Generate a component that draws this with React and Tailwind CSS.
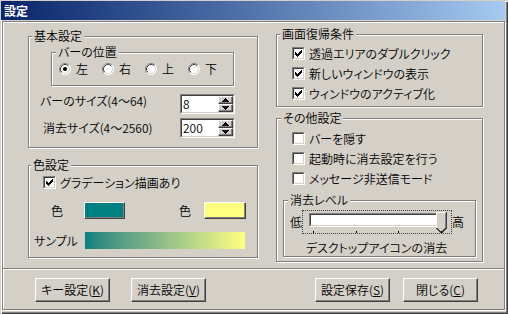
import React from 'react';

// Win2000-style 設定 dialog

const sunkenOuter = 'border border-t-[#808080] border-l-[#808080] border-b-white border-r-white';
const sunkenInner = 'border border-t-[#404040] border-l-[#404040] border-b-[#d4d0c8] border-r-[#d4d0c8]';
const raised = 'border border-t-white border-l-white border-b-[#404040] border-r-[#404040] shadow-[inset_-1px_-1px_0_#808080]';
const etched = 'relative border border-[#808080] shadow-[inset_1px_1px_0_#fff,1px_1px_0_#fff]';

function Group({ label, labelPos = 'left-[3px]', className = '', children }) {
    return (
        <div className={`${etched} ${className}`}>
            <span className={`absolute -top-[8px] ${labelPos} bg-[#d4d0c8] px-[2px] leading-[14px] whitespace-nowrap`}>{label}</span>
            {children}
        </div>
    );
}

function Check({ checked }) {
    return (
        <div className={`w-[13px] h-[13px] shrink-0 ${sunkenOuter}`}>
            <div className={`w-full h-full bg-white ${sunkenInner}`}>
                {checked && (
                    <svg width="9" height="9" viewBox="0 0 9 9" shapeRendering="crispEdges" className="block">
                        <path d="M7 1h1v1h-1z M6 2h2v1h-2z M1 3h1v1h-1z M5 3h3v1h-3z M1 4h2v1h-2z M4 4h3v1h-3z M1 5h5v1h-5z M2 6h3v1h-3z M3 7h1v1h-1z" fill="#000" />
                    </svg>
                )}
            </div>
        </div>
    );
}

function CheckRow({ checked, children }) {
    return (
        <div className="flex items-center h-[13px]">
            <Check checked={checked} />
            <span className="ml-[4px] leading-[14px] whitespace-nowrap">{children}</span>
        </div>
    );
}

function Radio({ checked, label }) {
    return (
        <div className="flex items-center w-[43px] h-[12px]">
            <svg width="12" height="12" viewBox="0 0 12 12" className="shrink-0">
                <circle cx="6" cy="6" r="5.5" fill="#fff" />
                <path d="M2.11 9.89 A5.5 5.5 0 0 1 9.89 2.11" fill="none" stroke="#808080" />
                <path d="M9.89 2.11 A5.5 5.5 0 0 1 2.11 9.89" fill="none" stroke="#fff" />
                <path d="M2.82 9.18 A4.5 4.5 0 0 1 9.18 2.82" fill="none" stroke="#404040" />
                <path d="M9.18 2.82 A4.5 4.5 0 0 1 2.82 9.18" fill="none" stroke="#d4d0c8" />
                {checked && <circle cx="6" cy="6" r="2" fill="#000" />}
            </svg>
            <span className="ml-[5px] leading-[14px]">{label}</span>
        </div>
    );
}

function Arrow({ down }) {
    return (
        <svg width="7" height="4" viewBox="0 0 7 4" shapeRendering="crispEdges" className="block">
            <path d={down ? 'M0 0h7v1h-7z M1 1h5v1h-5z M2 2h3v1h-3z M3 3h1v1h-1z' : 'M3 0h1v1h-1z M2 1h3v1h-3z M1 2h5v1h-5z M0 3h7v1h-7z'} fill="#000" />
        </svg>
    );
}

function Spin({ value }) {
    return (
        <div className={`w-[55px] h-[20px] ${sunkenOuter}`}>
            <div className={`w-full h-full flex bg-white ${sunkenInner}`}>
                <span className="pl-[1px] leading-[16px]">{value}</span>
                <div className="ml-auto flex flex-col w-[15px]">
                    <div className={`h-[8px] bg-[#d4d0c8] flex items-center justify-center ${raised}`}>
                        <Arrow />
                    </div>
                    <div className={`h-[8px] bg-[#d4d0c8] flex items-center justify-center ${raised}`}>
                        <Arrow down />
                    </div>
                </div>
            </div>
        </div>
    );
}

function Btn({ label, keyChar, className = '' }) {
    return (
        <button type="button" className={`w-[75px] h-[24px] bg-[#d4d0c8] flex items-center justify-center leading-[14px] ${raised} ${className}`}>
            {label}(<span className="underline">{keyChar}</span>)
        </button>
    );
}

function Swatch({ color, className = '' }) {
    return <div className={`h-[17px] ${raised} ${color} ${className}`} />;
}

export default function App() {
    return (
        <div className="w-[508px] h-[314px] bg-[#d4d0c8] text-black text-[12px] font-['Noto_Sans_CJK_JP',sans-serif] font-[350] [font-feature-settings:'palt'] pt-[1px] pl-[1px] overflow-hidden shadow-[inset_1px_1px_0_#d4d0c8,inset_2px_2px_0_#fff,inset_-1px_-1px_0_#404040,inset_-2px_-2px_0_#808080]">
            {/* Title bar */}
            <div className="h-[19px] w-[504px] bg-linear-to-r from-[#0a246a] to-[#a6caf0] flex items-center pl-[3px] text-white font-bold leading-[14px]">
                設定
            </div>

            {/* Body */}
            <div className="ml-[1px] mt-[1px] w-[503px] h-[289px] border border-[#808080] shadow-[inset_1px_1px_0_#fff,1px_1px_0_#fff] flex flex-col">
                <div className="h-[246px] flex">
                    {/* Left column */}
                    <div className="ml-[25px] mt-[14px] w-[230px] flex flex-col">
                        <Group label="基本設定" className="h-[112px] flex flex-col">
                            <Group label="バーの位置" labelPos="left-[4px]" className="ml-[22px] mt-[15px] w-[183px] h-[34px] flex pl-[7px] pt-[10px]">
                                <Radio checked label="左" />
                                <Radio label="右" />
                                <Radio label="上" />
                                <Radio label="下" />
                            </Group>
                            <div className="mt-[8px] h-[20px] flex items-center">
                                <span className="ml-[11px] mb-[6px] leading-[14px]">バーのサイズ(4～64)</span>
                                <div className="ml-auto mr-[22px]"><Spin value="8" /></div>
                            </div>
                            <div className="mt-[4px] h-[20px] flex items-center">
                                <span className="ml-[14px] mb-[1px] leading-[14px]">消去サイズ(4～2560)</span>
                                <div className="ml-auto mr-[22px]"><Spin value="200" /></div>
                            </div>
                        </Group>

                        <Group label="色設定" labelPos="left-[2px]" className="mt-[17px] h-[93px] flex flex-col">
                            <div className="mt-[10px] pl-[14px]">
                                <CheckRow checked>グラデーション描画あり</CheckRow>
                            </div>
                            <div className="mt-[13px] h-[17px] flex items-center">
                                <span className="ml-[22px] w-[12px] leading-[14px]">色</span>
                                <Swatch color="bg-[#008080]" className="ml-[21px] w-[41px]" />
                                <span className="ml-[54px] w-[12px] leading-[14px]">色</span>
                                <Swatch color="bg-[#ffff80]" className="ml-[13px] w-[42px]" />
                            </div>
                            <div className="mt-[13px] h-[17px] flex items-center">
                                <span className="ml-[5px] w-[51px] leading-[14px]">サンプル</span>
                                <div className="w-[160px] h-[17px] bg-linear-to-r from-[#008080] to-[#ffff80]" />
                            </div>
                        </Group>
                    </div>

                    {/* Right column */}
                    <div className="ml-[18px] mt-[12px] w-[207px] flex flex-col">
                        <Group label="画面復帰条件" className="h-[73px] flex flex-col gap-[7px] pt-[12px] pl-[15px]">
                            <CheckRow checked>透過エリアのダブルクリック</CheckRow>
                            <CheckRow checked>新しいウィンドウの表示</CheckRow>
                            <CheckRow checked>ウィンドウのアクティブ化</CheckRow>
                        </Group>

                        <Group label="その他設定" labelPos="left-[4px]" className="mt-[11px] h-[144px] flex flex-col">
                            <div className="mt-[13px] pl-[15px] flex flex-col gap-[7px]">
                                <CheckRow>バーを隠す</CheckRow>
                                <CheckRow>起動時に消去設定を行う</CheckRow>
                                <CheckRow>メッセージ非送信モード</CheckRow>
                            </div>
                            <Group label="消去レベル" labelPos="left-[4px]" className="ml-[6px] mt-[15px] w-[193px] h-[57px] flex flex-col">
                                <div className="mt-[9px] flex items-center">
                                    <span className="ml-[6px] w-[12px] leading-[14px]">低</span>
                                    <div className="relative w-[150px] h-[24px] border border-dotted border-[#404040] pl-[6px] pt-[2px]">
                                        <div className={`w-[137px] h-[14px] ${sunkenOuter}`}>
                                            <div className={`w-full h-full bg-white ${sunkenInner}`} />
                                        </div>
                                        <svg width="11" height="21" viewBox="0 0 11 21" shapeRendering="crispEdges" className="absolute left-[133px] top-[1px]">
                                            <path d="M0 0H11V16L6 21H5L0 16Z" fill="#d4d0c8" />
                                            <path d="M0.5 16V0.5H10" fill="none" stroke="#fff" />
                                            <path d="M10.5 0V16L5.5 21L0.5 16" fill="none" stroke="#404040" />
                                            <path d="M9.5 1V15.6L5.5 19.6" fill="none" stroke="#808080" />
                                        </svg>
                                        <div className="absolute left-[10px] top-[20px] w-[1px] h-[2px] bg-black" />
                                        <div className="absolute left-[53px] top-[20px] w-[1px] h-[2px] bg-black" />
                                        <div className="absolute left-[95px] top-[20px] w-[1px] h-[2px] bg-black" />
                                        <div className="absolute left-[138px] top-[20px] w-[1px] h-[2px] bg-black" />
                                    </div>
                                    <span className="w-[14px] leading-[14px]">高</span>
                                </div>
                                <div className="mt-[7px] text-center pr-[6px] leading-[14px]">デスクトップアイコンの消去</div>
                            </Group>
                        </Group>
                    </div>
                </div>

                <div className="h-[2px] border-t border-t-[#808080] border-b border-b-white" />

                <div className="flex pt-[8px]">
                    <Btn label="キー設定" keyChar="K" className="ml-[32px]" />
                    <Btn label="消去設定" keyChar="V" className="ml-[21px]" />
                    <Btn label="設定保存" keyChar="S" className="ml-[109px]" />
                    <Btn label="閉じる" keyChar="C" className="ml-[13px]" />
                </div>
            </div>
        </div>
    );
}
